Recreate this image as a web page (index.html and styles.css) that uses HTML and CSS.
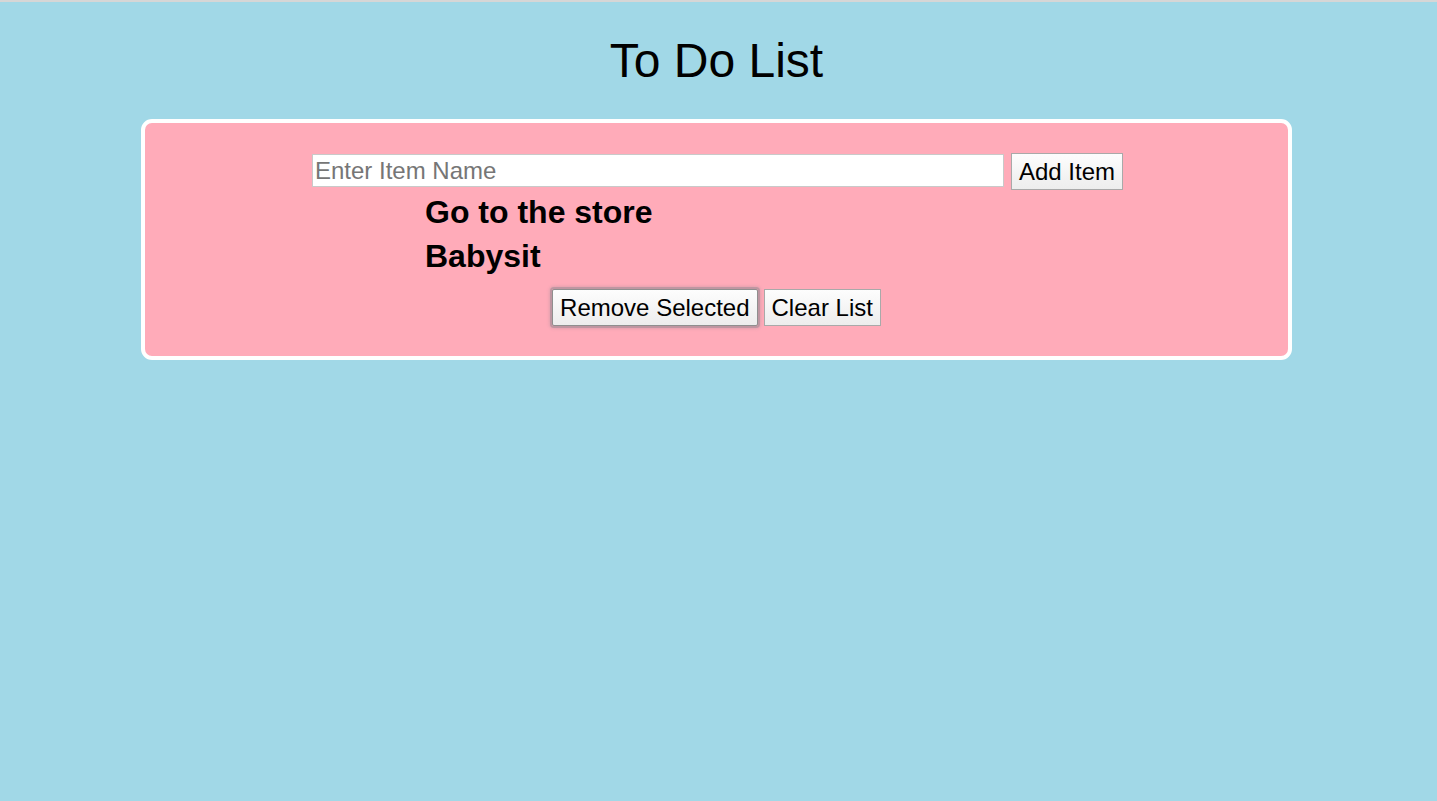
FILE: index.html
```html
<!DOCTYPE html>
<html lang="en">
<head>
<meta charset="utf-8">
<title>To Do List</title>
<link rel="stylesheet" href="styles.css">
</head>
<body>
<h1 class="title">To Do List</h1>
<div class="card">
  <div class="add-row">
    <input class="item-input" type="text" placeholder="Enter Item Name">
    <button class="btn">Add Item</button>
  </div>
  <ul class="items">
    <li class="item">Go to the store</li>
    <li class="item">Babysit</li>
  </ul>
  <div class="actions">
    <button class="btn btn-focus">Remove Selected</button>
    <button class="btn">Clear List</button>
  </div>
</div>
</body>
</html>
```
FILE: styles.css
```css
html, body {
  margin: 0;
  padding: 0;
}
body {
  background: #a1d8e7;
  border-top: 2px solid #d6d6d6;
  min-height: 799px;
  font-family: "Liberation Sans", Arial, Helvetica, sans-serif;
  color: #000;
}
.title {
  margin: 31px 0 31px;
  padding-right: 4px;
  text-align: center;
  font-size: 48px;
  font-weight: normal;
  line-height: 55px;
}
.card {
  box-sizing: border-box;
  width: 1151px;
  margin-left: 141px;
  background: #ffabb9;
  border: 4px solid #fff;
  border-radius: 11px;
  padding: 30px 0 30px;
}
.add-row {
  display: flex;
  justify-content: center;
  align-items: flex-start;
  gap: 7px;
  height: 37px;
  padding-left: 2px;
}
.item-input {
  box-sizing: border-box;
  width: 692px;
  height: 33px;
  margin-top: 1px;
  border: 1px solid #c9c9c9;
  padding: 0 2px;
  font-family: "Liberation Sans", Arial, sans-serif;
  font-size: 24px;
  background: #fff;
  outline: none;
}
.item-input::placeholder {
  color: #767676;
}
.btn {
  box-sizing: border-box;
  height: 37px;
  padding: 0 7px;
  font-family: "Liberation Sans", Arial, sans-serif;
  font-size: 24px;
  line-height: 35px;
  color: #000;
  background: linear-gradient(#fdfdfd, #ededed);
  border: 1px solid #a9a9a9;
  border-radius: 0;
}
.items {
  list-style: none;
  margin: 0;
  padding: 0 0 0 280px;
}
.item {
  font-size: 32px;
  font-weight: bold;
  line-height: 44px;
}
.actions {
  display: flex;
  justify-content: center;
  align-items: flex-start;
  gap: 6px;
  margin-top: 11px;
  height: 37px;
}
.btn-focus {
  border-color: #8f8f8f;
  border-radius: 2px;
  box-shadow: 0 0 0 2px rgba(160, 140, 150, 0.55), 0 0 3px 3px rgba(180, 150, 160, 0.4);
}
```
